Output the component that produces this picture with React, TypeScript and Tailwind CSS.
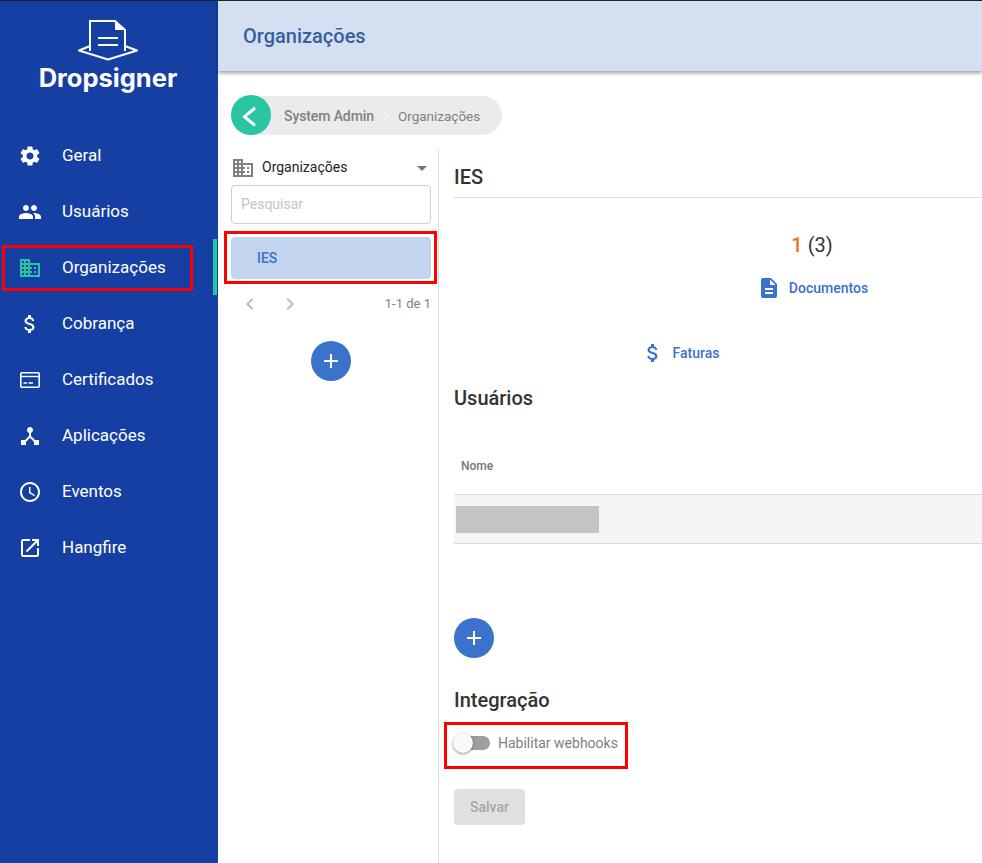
import { MdSettings, MdPeople, MdDomain, MdAttachMoney, MdDeviceHub, MdAccessTime, MdOpenInNew, MdDescription, MdChevronLeft, MdChevronRight, MdAdd, MdArrowDropDown } from 'react-icons/md'

function CardIcon({ className }: { className?: string }) {
  return (
    <svg viewBox="0 0 24 24" fill="none" stroke="currentColor" className={className}>
      <rect x="2.8" y="4.8" width="18.4" height="14.4" rx="1" strokeWidth="1.6" />
      <path d="M3 8.5H21" strokeWidth="1.4" />
      <path d="M5.5 15H9M10.5 15H15" strokeWidth="1.6" />
    </svg>
  )
}

const menu = [
  { label: 'Geral', icon: MdSettings },
  { label: 'Usuários', icon: MdPeople },
  { label: 'Organizações', icon: MdDomain, active: true },
  { label: 'Cobrança', icon: MdAttachMoney },
  { label: 'Certificados', icon: CardIcon },
  { label: 'Aplicações', icon: MdDeviceHub },
  { label: 'Eventos', icon: MdAccessTime },
  { label: 'Hangfire', icon: MdOpenInNew },
]

function Logo() {
  return (
    <div className="flex h-[127px] flex-col items-center pr-[2px] pt-[19px]">
      <svg width="62" height="41" viewBox="0 0 62 41" fill="none" stroke="white" strokeWidth="2">
        <path d="M13 31V1H38L48 10V31" />
        <path d="M38 1L48 10H38Z" fill="white" stroke="none" />
        <path d="M21 18H41M21 25H41" />
        <path d="M13 26L2 30.5L31 39.5L60 30.5L48 26" strokeLinejoin="round" />
      </svg>
      <div className="mt-[2px] font-['Inter',sans-serif] text-[25.5px] leading-[30px] font-bold text-white">Dropsigner</div>
    </div>
  )
}

function Sidebar() {
  return (
    <aside className="w-[218px] shrink-0 bg-[#153fa3]">
      <Logo />
      <nav>
        {menu.map((item) => (
          <div key={item.label} className="relative flex h-[56px] items-center">
            <item.icon className={`ml-[18px] h-6 w-6 ${item.active ? 'text-[#29c5a3]' : 'text-white'}`} />
            <span className="ml-[20px] text-[17px] text-white">{item.label}</span>
            {item.active && <div className="absolute right-[1px] -top-[1px] h-[56px] w-[4px] bg-[#29c5a3]" />}
            {item.active && <div className="absolute left-[2px] top-[5px] h-[46px] w-[191px] rounded-[1px] border-[3px] border-[#f00]" />}
          </div>
        ))}
      </nav>
    </aside>
  )
}

function Breadcrumb() {
  return (
    <div className="ml-[13px] mt-[24px] flex h-[40px] w-[271px] items-center">
      <div className="z-10 flex h-[40px] w-[40px] items-center justify-center rounded-full bg-[#29c5a3]">
        <svg width="40" height="40" viewBox="0 0 40 40" fill="none" stroke="white" strokeWidth="3">
          <path d="M24 13L13.5 21.7L24 30.5" />
        </svg>
      </div>
      <div className="-ml-[20px] flex h-[39px] flex-1 items-center rounded-r-full bg-[#ebebeb] pl-[33px] pt-[2px] text-[14px] text-[#808080]">
        <span className="font-medium tracking-[-0.1px]">System Admin</span>
        <MdChevronRight className="h-[22px] w-[24px] text-[#f4f4f4]" />
        <span className="text-[13.5px]">Organizações</span>
      </div>
    </div>
  )
}

function ListPanel() {
  return (
    <div className="w-[221px] shrink-0 border-r border-[#dcdcdc] pl-[13px] pr-[4px]">
      <div className="flex h-[35px] items-center">
        <MdDomain className="h-[24px] w-[24px] text-[#808080]" />
        <span className="ml-[7px] flex-1 text-[14px] text-[#222]">Organizações</span>
        <MdArrowDropDown className="h-[24px] w-[24px] text-[#777]" />
      </div>
      <div className="flex h-[39px] w-[200px] items-center rounded-[4px] border border-[#cfcfcf] pb-[1px] pl-[9px] text-[14px] text-[#c4c4c4]">Pesquisar</div>
      <div className="relative mt-[13px] flex h-[42px] w-[200px] items-center rounded-[4px] bg-[#c3d4ee] pl-[26px] text-[14px] font-medium text-[#3a72cc]">
        IES
        <div className="absolute -left-[7px] -top-[6px] h-[53px] w-[213px] border-[3px] border-[#f00]" />
      </div>
      <div className="mt-[13px] flex h-[24px] w-[200px] items-center">
        <MdChevronLeft className="ml-[7px] h-[24px] w-[24px] text-[#bdbdbd]" />
        <MdChevronRight className="ml-[16px] h-[24px] w-[24px] text-[#bdbdbd]" />
        <span className="ml-auto text-[13px] text-[#808080]">1-1 de 1</span>
      </div>
      <button className="ml-[80px] mt-[25px] flex h-[40px] w-[40px] items-center justify-center rounded-full bg-[#3a72cc]">
        <MdAdd className="h-[24px] w-[24px] text-white" />
      </button>
    </div>
  )
}

function DetailPanel() {
  return (
    <div className="min-w-0 flex-1 overflow-hidden pl-[15px]">
      <div className="flex h-[48px] items-center border-b border-[#dcdcdc] pt-[7px] text-[20px] font-medium text-[#333]">IES</div>
      <div className="w-[716px] pt-[35px] text-center text-[20px] leading-[24px] text-[#333]">
        <span className="font-medium text-[#f07020]">1</span> (3)
      </div>
      <div className="mt-[19px] flex w-[716px] items-center justify-center pl-[1px]">
        <MdDescription className="h-[24px] w-[24px] text-[#3a72cc]" />
        <span className="ml-[8px] text-[14px] font-medium text-[#3a72cc]">Documentos</span>
      </div>
      <div className="mt-[41px] flex w-[452px] items-center justify-center">
        <MdAttachMoney className="h-[24px] w-[24px] text-[#3a72cc]" />
        <span className="ml-[8px] text-[14px] font-medium text-[#3a72cc]">Faturas</span>
      </div>
      <h2 className="mt-[19px] text-[20px] leading-[28px] font-medium text-[#333]">Usuários</h2>
      <div className="mt-[26px] flex h-[57px] items-center border-b border-[#dcdcdc] pl-[7px] text-[12px] font-medium text-[#777]">Nome</div>
      <div className="flex h-[49px] items-center border-b border-[#dcdcdc] bg-[#f4f5f5] pl-[2px]">
        <div className="h-[27px] w-[143px] bg-[#c4c4c4]" />
      </div>
      <button className="mt-[74px] flex h-[40px] w-[40px] items-center justify-center rounded-full bg-[#3a72cc]">
        <MdAdd className="h-[24px] w-[24px] text-white" />
      </button>
      <h2 className="mt-[28px] text-[20px] leading-[28px] font-medium text-[#333]">Integração</h2>
      <div className="relative mt-[15px] flex h-[28px] items-center">
        <div className="relative h-[14px] w-[36px] rounded-full bg-[#9e9e9e]">
          <div className="absolute -left-[1px] -top-[3px] h-[20px] w-[20px] rounded-full bg-[#fafafa] shadow-[0_1px_3px_rgba(0,0,0,0.45)]" />
        </div>
        <span className="ml-[8px] text-[14px] text-[#808080]">Habilitar webhooks</span>
        <div className="absolute -left-[10px] -top-[7px] h-[47px] w-[184px] border-[3px] border-[#f00]" />
      </div>
      <button className="mt-[32px] h-[36px] w-[71px] rounded-[4px] bg-[#e0e0e0] text-[14px] font-medium text-[#a6a6a6]">Salvar</button>
    </div>
  )
}

export default function App() {
  return (
    <div className="flex h-[863px] w-[982px] overflow-hidden border-t border-[#222] bg-white font-['Roboto',sans-serif]">
      <Sidebar />
      <main className="min-w-0 flex-1">
        <header className="flex h-[70px] items-center bg-[#d4e0f1] pl-[25px] text-[20px] font-medium text-[#365f9c] shadow-[0_2px_4px_rgba(0,0,0,0.4)]">Organizações</header>
        <Breadcrumb />
        <div className="mt-[15px] flex h-[713px]">
          <ListPanel />
          <DetailPanel />
        </div>
      </main>
    </div>
  )
}
